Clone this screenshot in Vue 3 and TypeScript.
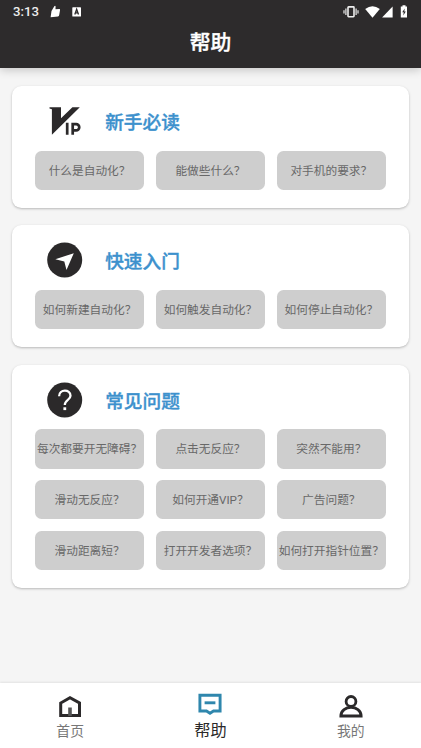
<script setup lang="ts">
interface HelpSection {
  icon: 'vip' | 'send' | 'question'
  title: string
  items: string[]
}

const sections: HelpSection[] = [
  { icon: 'vip', title: '新手必读', items: ['什么是自动化？', '能做些什么？', '对手机的要求？'] },
  { icon: 'send', title: '快速入门', items: ['如何新建自动化？', '如何触发自动化？', '如何停止自动化？'] },
  {
    icon: 'question',
    title: '常见问题',
    items: [
      '每次都要开无障碍？', '点击无反应？', '突然不能用？',
      '滑动无反应？', '如何开通VIP？', '广告问题？',
      '滑动距离短？', '打开开发者选项？', '如何打开指针位置？',
    ],
  },
]
</script>

<template>
  <div class="screen">
    <header class="header">
      <div class="status">
        <span class="time">3:13</span>
        <svg class="thumb" width="11" height="13" viewBox="0 0 11 13">
          <path d="M1.500 6 4.300 1.200Q5.300 0 5.600 1.600L5.500 4.300 9.400 4.100Q10.300 4.200 10 5.300L9.200 10Q9 11.300 8 11.500L.6 12.200z" fill="#fff" />
        </svg>
        <svg class="app-mark" width="10" height="10" viewBox="0 0 10 10">
          <rect x=".3" y=".3" width="8.700" height="9.200" rx=".6" fill="#fff" />
          <path d="M2.800 7.500 4.650 2.300 6.500 7.500M3.500 5.800H5.900" fill="none" stroke="#2d2b2c" stroke-width="1.300" />
        </svg>
        <span class="spacer"></span>
        <svg class="vibrate" width="16" height="12" viewBox="0 0 16 12">
          <rect x="5" y=".9" width="6" height="9.800" rx=".6" fill="none" stroke="#eee" stroke-width="1.600" />
          <path d="M2.900 2.500v6.600M13.100 2.500v6.600M1 4.200v3.200M15 4.200v3.200" stroke="#ddd" stroke-width="1.300" />
        </svg>
        <svg class="wifi" width="15" height="12" viewBox="0 0 15 12">
          <path d="M.2 2.900Q7.500-2.300 14.800 2.900L7.500 11.800z" fill="#fff" />
        </svg>
        <svg class="signal" width="11" height="12" viewBox="0 0 11 12">
          <path d="M10.600.6V11.400H.1z" fill="#fff" />
        </svg>
        <svg class="battery" width="8" height="13" viewBox="0 0 8 13">
          <path d="M2.500.2h3v1.200H7v11.200H.8V1.400h1.700z" fill="#fff" />
          <path d="M4.700 3.500 2.200 7.300h1.500l-.4 3.100 2.500-4H4.300z" fill="#2d2b2c" />
        </svg>
      </div>
      <h1 class="page-title">帮助</h1>
    </header>

    <main class="content">
      <section v-for="s in sections" :key="s.title" class="card">
        <div class="card-head">
          <svg v-if="s.icon === 'vip'" class="card-icon" viewBox="0 0 36 36">
            <path d="M2.500 4.200H14V15.200L25.400 4.200H32.800L4.900 31.800V6.300L2.500 5.400z" fill="#2b292a" />
            <path d="M20.200 19.800v12M25.700 31.800V21.100h3.400a3 3 0 0 1 0 6.300h-3.200" fill="none" stroke="#2b292a" stroke-width="2.700" />
          </svg>
          <svg v-else-if="s.icon === 'send'" class="card-icon" viewBox="0 0 36 36">
            <circle cx="17.700" cy="18" r="17.500" fill="#2b292a" />
            <path d="M26.800 11.200 8.300 17.300 17.300 19.600 19.500 28z" fill="#fff" />
          </svg>
          <svg v-else class="card-icon" viewBox="0 0 36 36">
            <circle cx="17.700" cy="18" r="17.500" fill="#2b292a" />
            <path d="M12.100 14.200C12.100 6.900 23.500 6.900 23.500 13.700C23.500 18 17.800 17.800 17.800 23" fill="none" stroke="#fff" stroke-width="2.300" />
            <rect x="16.400" y="25.300" width="2.800" height="2.800" fill="#fff" />
          </svg>
          <h2 class="card-title">{{ s.title }}</h2>
        </div>
        <div class="grid">
          <button v-for="item in s.items" :key="item" class="topic">{{ item }}</button>
        </div>
      </section>
    </main>

    <nav class="tabs">
      <a class="tab">
        <svg class="tab-icon" viewBox="0 0 24 24">
          <path d="M2.700 21.500V9L12 3.700 21.500 9V21.500z" fill="none" stroke="#2b292a" stroke-width="3" />
          <path d="M12 13.500v8.500" stroke="#555" stroke-width="3.600" />
        </svg>
        <span>首页</span>
      </a>
      <a class="tab active">
        <svg class="tab-icon" viewBox="0 0 24 24">
          <path d="M1.900 3.200H22.100V19H15.500L12 21.200 8.500 19H1.900z" fill="none" stroke="#2f87ad" stroke-width="2.900" />
          <path d="M6.600 10.800h10.800" stroke="#2f87ad" stroke-width="2.900" />
        </svg>
        <span>帮助</span>
      </a>
      <a class="tab">
        <svg class="tab-icon" viewBox="0 0 24 24">
          <circle cx="12" cy="7.400" r="4.900" fill="none" stroke="#2b292a" stroke-width="2.800" />
          <path d="M1.900 22C1.900 10.500 22.100 10.500 22.100 22z" fill="none" stroke="#2b292a" stroke-width="2.900" />
        </svg>
        <span>我的</span>
      </a>
    </nav>
  </div>
</template>

<style>
body { margin: 0; }
</style>

<style scoped>
.screen {
  width: 421px;
  height: 748px;
  display: flex;
  flex-direction: column;
  overflow: hidden;
  background: #f5f5f5;
  font-family: Roboto, "Noto Sans CJK SC", sans-serif;
}
.header {
  flex: none;
  height: 68px;
  background: #2d2b2c;
  color: #fff;
  box-shadow: 0 2px 9px rgba(0, 0, 0, 0.2);
}
.status {
  display: flex;
  align-items: center;
  height: 23px;
  padding: 0 13px;
}
.time { width: 37px; font-size: 13.200px; font-weight: 500; color: #eee; }
.app-mark { margin-left: 11px; }
.spacer { flex: 1; }
.wifi { margin-left: 6px; }
.signal { margin-left: 2px; }
.battery { margin-left: 7px; }
.page-title {
  margin: 0;
  text-align: center;
  font-size: 20.800px;
  line-height: 40px;
  font-weight: 500;
  -webkit-text-stroke: 0.350px currentColor;
}
.content {
  flex: 1;
  display: flex;
  flex-direction: column;
  gap: 17.600px;
  padding: 18px 12px 0;
}
.card {
  padding: 17px 23px 18px;
  border-radius: 9.500px;
  background: #fff;
  box-shadow: 0 1px 2.500px rgba(0, 0, 0, 0.25);
}
.card-head {
  display: flex;
  align-items: center;
  height: 36px;
  margin-bottom: 11.600px;
  padding-left: 11.500px;
}
.card-icon { width: 36px; height: 36px; margin-right: 22.700px; }
.card-title {
  margin: 0;
  padding-top: 4px;
  font-size: 18.700px;
  font-weight: 500;
  line-height: 28px;
  color: #3d91cd;
  -webkit-text-stroke: 0.350px currentColor;
}
.grid {
  display: grid;
  grid-template-columns: repeat(3, 109.200px);
  gap: 11.700px;
}
.topic {
  height: 39.200px;
  padding: 0 0 2px;
  border: 0;
  border-radius: 6.500px;
  background: #cecece;
  color: #686868;
  font: inherit;
  font-size: 11.700px;
  white-space: nowrap;
}
.tabs {
  flex: none;
  display: flex;
  height: 65px;
  background: #fff;
  box-shadow: 0 -1px 2px rgba(0, 0, 0, 0.08);
}
.tab {
  flex: 1;
  display: flex;
  flex-direction: column;
  align-items: center;
  padding-top: 11px;
  font-size: 13.800px;
  line-height: 20px;
  color: #777;
}
.tab-icon { width: 24px; height: 24px; margin-bottom: 3px; }
.active {
  padding-top: 9px;
  font-size: 16.200px;
  line-height: 24px;
  color: #2b292a;
}
</style>
